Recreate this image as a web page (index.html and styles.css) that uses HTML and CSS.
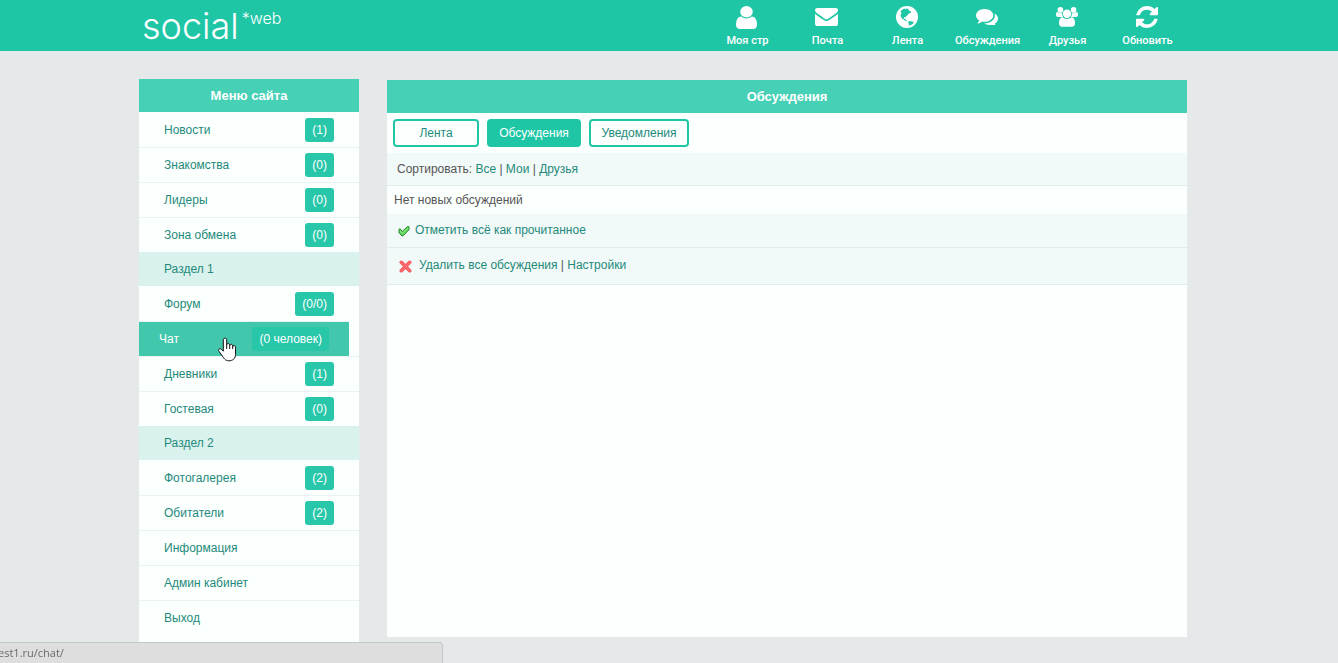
FILE: index.html
```html
<!DOCTYPE html>
<html lang="ru">
<head>
<meta charset="utf-8">
<title>Обсуждения</title>
<link rel="stylesheet" href="styles.css">
</head>
<body>
<header class="topbar">
  <div class="wrap topbar-inner">
    <a class="logo" href="#">social<span class="logo-sup">*web</span></a>
    <nav class="topnav">
      <a class="topnav-item" href="#"><span class="ico"><svg width="21" height="23" viewBox="256 128 1280 1536" preserveAspectRatio="none"><path d="M1536 1399q0 109-62.500 187t-150.500 78h-854q-88 0-150.500-78t-62.500-187q0-85 8.500-160.500t31.500-152 58.500-131 94-89 134.500-34.500q131 128 313 128t313-128q76 0 134.500 34.500t94 89 58.500 131 31.500 152 8.500 160.500zm-256-887q0 159-112.500 271.500t-271.500 112.500-271.500-112.500-112.500-271.500 112.500-271.500 271.500-112.500 271.500 112.500 112.500 271.500z"/></svg></span>Моя стр</a>
      <a class="topnav-item" href="#"><span class="ico"><svg width="23" height="18" viewBox="0 256 1792 1408"><path d="M1792 710v794q0 66-47 113t-113 47h-1472q-66 0-113-47t-47-113v-794q44 49 101 87 362 246 497 345 57 42 92.500 65.500t94.500 48 110 24.500h2q51 0 110-24.500t94.500-48 92.500-65.500q170-123 498-345 57-39 100-87zm0-294q0 79-49 151t-122 123q-376 261-468 325-10 7-42.500 31t-54 38.500-52 32.500-57.500 27-50 9h-2q-23 0-50-9t-57.500-27-52-32.500-54-38.500-42.500-31q-91-64-262-182.500t-205-142.500q-62-42-117-115.500t-55-136.500q0-78 41.500-130t118.500-52h1472q65 0 112.500 47t47.500 113z"/></svg></span>Почта</a>
      <a class="topnav-item" href="#"><span class="ico"><svg width="22" height="22" viewBox="0 0 22 22"><circle cx="11" cy="11" r="11"/><path class="land" d="M4.500 4.800l1.400-.6 1.300-1.200 1.500-.5.800.7 1.500-.8 1.700.4-1 1 1.300.3.800 1.100 1.400.4-.3 1.500-1.500.2-1.300 1-.7 1.300-1.300.7-.5 1.100-1.200-.4-.8.9.9.9 1 .1.300 1.200 1.300.5-.4.7-1.800-.8-1.400-1.200-1.600-.8-1.100-1.900-.2-1.800.9-1.500zM12.300 15.800l1.600-.9 1.900.6 1.700.6.100.9-1.400 1.300-2.200 1.100-1.400.2.500-1.700-.9-.9z"/></svg></span>Лента</a>
      <a class="topnav-item" href="#"><span class="ico"><svg width="22" height="16" viewBox="0 256 1792 1280" preserveAspectRatio="none"><path d="M1408 768q0 139-94 257t-256.500 186.500-353.500 68.500q-86 0-176-16-124 88-278 128-36 9-86 16h-3q-11 0-20.500-8t-11.500-21q-1-3-1-6.500t.5-6.500 2-6l2.500-5 3.500-5.500 4-5 4.500-5 4-4.500q5-6 23-25t26-29.500 22.500-29 25-38.500 20.500-44q-124-72-195-177t-71-224q0-139 94-257t256.500-186.500 353.500-68.500 353.500 68.500 256.500 186.500 94 257zm384 256q0 120-71 224.500t-195 176.500q10 24 20.500 44t25 38.500 22.500 29 26 29.500 23 25q1 1 4 4.500t4.500 5 4 5 3.500 5.500l2.500 5 2 6 .5 6.500-1 6.500q-3 14-13 22t-22 7q-50-7-86-16-154-40-278-128-90 16-176 16-271 0-472-132 58 4 88 4 161 0 309-45t264-129q125-92 192-212t67-254q0-77-23-152 129 71 204 178t75 230z"/></svg></span>Обсуждения</a>
      <a class="topnav-item" href="#"><span class="ico"><svg width="22" height="20" viewBox="0 0 22 20"><circle cx="4.400" cy="2.900" r="2.800"/><circle cx="17.600" cy="2.900" r="2.800"/><circle cx="11" cy="6.800" r="4.200"/><path d="M6.700 9.900H2.200C.7 9.900 0 9 0 7.900 0 6.200.4 5 1.300 5c.5 0 1.500 1.200 3.300 1.200.5 0 1-.1 1.600-.3-.2 1.500.1 2.900.9 3.900zM15.300 9.900h4.500c1.500 0 2.200-.9 2.200-2 0-1.700-.4-2.900-1.300-2.900-.5 0-1.500 1.200-3.300 1.200-.5 0-1-.1-1.600-.3.200 1.500-.1 2.900-.9 3.900zM6.700 10.300c1.100.9 2.500 1.700 4.300 1.700s3.200-.8 4.300-1.700c2.700 0 3.700 2.600 3.700 6.300 0 2-1.300 3.200-3 3.200H6c-1.700 0-3-1.200-3-3.200 0-3.700 1-6.300 3.700-6.300z"/></svg></span>Друзья</a>
      <a class="topnav-item" href="#"><span class="ico"><svg width="22" height="22" viewBox="128 128 1536 1536"><path d="M1639 1056q0 5-1 7-64 268-268 434.500t-478 166.500q-146 0-282.500-55t-243.500-157l-129 129q-19 19-45 19t-45-19-19-45v-448q0-26 19-45t45-19h448q26 0 45 19t19 45-19 45l-137 137q71 66 161 102t187 36q134 0 250-65t186-179q11-17 53-117 8-23 30-23h192q13 0 22.500 9.500t9.500 22.500zm25-800v448q0 26-19 45t-45 19h-448q-26 0-45-19t-19-45 19-45l138-138q-148-137-349-137-134 0-250 65t-186 179q-11 17-53 117-8 23-30 23h-199q-13 0-22.500-9.500t-9.500-22.500v-7q65-268 270-434.500t480-166.500q146 0 284 55.500t245 156.500l130-129q19-19 45-19t45 19 19 45z"/></svg></span>Обновить</a>
    </nav>
  </div>
</header>

<div class="wrap page">
  <aside class="sidebar">
    <h2 class="title">Меню сайта</h2>
    <nav class="menu">
      <a class="menu-item first" href="#">Новости<span class="badge">(1)</span></a>
      <a class="menu-item" href="#">Знакомства<span class="badge">(0)</span></a>
      <a class="menu-item" href="#">Лидеры<span class="badge">(0)</span></a>
      <a class="menu-item" href="#">Зона обмена<span class="badge">(0)</span></a>
      <div class="menu-section">Раздел 1</div>
      <a class="menu-item first" href="#">Форум<span class="badge">(0/0)</span></a>
      <a class="menu-item active" href="#">Чат<span class="badge">(0 человек)</span>
        <svg class="cursor" width="19" height="25" viewBox="0 0 19 25"><path d="M7 1.200C5.900 1.200 5.300 2 5.300 3v11.200L3.500 12.400c-.9-.8-1.900-.8-2.500-.2-.6.700-.5 1.500.1 2.300l3.300 4.600c1.100 1.700 1.900 2.500 2.300 3 .9 1 2.200 1.700 4.100 1.700 4 0 6.700-2.300 6.700-6.300V10.200c0-1-.6-1.700-1.400-1.700s-1.400.5-1.400 1.300v-.9c0-1-.7-1.600-1.500-1.600s-1.500.6-1.500 1.500v-.7c0-1-.7-1.600-1.500-1.600s-1.500.6-1.500 1.500V3c0-1-.6-1.800-1.700-1.800z"/><path d="M8.700 8v4M11.700 8.500V12M14.700 9.500V12"/></svg>
      </a>
      <a class="menu-item" href="#">Дневники<span class="badge">(1)</span></a>
      <a class="menu-item" href="#">Гостевая<span class="badge">(0)</span></a>
      <div class="menu-section">Раздел 2</div>
      <a class="menu-item first" href="#">Фотогалерея<span class="badge">(2)</span></a>
      <a class="menu-item" href="#">Обитатели<span class="badge">(2)</span></a>
      <a class="menu-item" href="#">Информация</a>
      <a class="menu-item" href="#">Админ кабинет</a>
      <a class="menu-item" href="#">Выход</a>
    </nav>
  </aside>

  <main class="content">
    <h1 class="title">Обсуждения</h1>
    <nav class="tabs">
      <a class="tab tab-short" href="#">Лента</a>
      <a class="tab current" href="#">Обсуждения</a>
      <a class="tab tab-long" href="#">Уведомления</a>
    </nav>
    <div class="row sort">Сортировать: <a href="#">Все</a> | <a href="#">Мои</a> | <a href="#">Друзья</a></div>
    <p class="empty">Нет новых обсуждений</p>
    <div class="row mark"><svg width="12" height="12" viewBox="0 0 12 12"><path d="M1 4.200l1.200-.4L4.300 6.500 9.500 1.500 11 1.800v3L4.800 11H4L1 7.800z" fill="#5fd35a" stroke="#2a8a30"/><path d="M2 6l2.500 2.500L10 3.500" fill="none" stroke="#8fe886"/></svg><a href="#">Отметить всё как прочитанное</a></div>
    <div class="row remove"><svg width="13" height="13" viewBox="0 0 13 13"><path d="M2.300 2.300l8.400 8.400M10.700 2.300l-8.400 8.400" fill="none" stroke="#f2555a" stroke-width="3.600" stroke-linecap="round"/><path d="M2.300 2.300l8.400 8.400M10.700 2.300l-8.400 8.400" fill="none" stroke="#fb6a6c" stroke-width="2" stroke-linecap="round"/></svg><span><a href="#">Удалить все обсуждения</a> | <a href="#">Настройки</a></span></div>
  </main>
</div>

<div class="statusbar">est1.ru/chat/</div>
</body>
</html>
```

FILE: styles.css
```css
* { box-sizing: border-box; }

body {
  margin: 0;
  min-height: 100vh;
  background: #e5e9ea;
  font: 12px/16px "Liberation Sans", Arial, sans-serif;
  color: #555;
}

a { color: #1f8a7a; text-decoration: none; }

.topbar, .page { padding-right: 12px; }
.topbar { background: #1fc6a6; }
.wrap { max-width: 1060px; margin: 0 auto; }
.topbar .wrap { max-width: 1048px; }

.page {
  display: flex;
  align-items: flex-start;
  gap: 28px;
  padding-top: 28px;
}

.topbar-inner {
  display: flex;
  justify-content: space-between;
  height: 51px;
}

.logo {
  display: flex;
  align-items: flex-start;
  gap: 3px;
  padding: 4px 0 0 3px;
  font: 300 36px/44px Inter, "Liberation Sans", sans-serif;
  color: #fff;
}
.logo-sup { font-size: 16px; line-height: 28px; }

.topnav { display: flex; }
.topnav-item {
  width: 80px;
  padding: 5px 0 0 1px;
  font: 500 11px/14px Roboto, "Liberation Sans", sans-serif;
  color: #fff;
  text-align: center;
}
.ico {
  display: flex;
  align-items: center;
  justify-content: center;
  height: 24px;
  margin-bottom: 5px;
  padding-right: 2px;
}
.ico svg { fill: #fff; }
.ico .land { fill: #1fc6a6; }

.sidebar {
  flex: 0 0 220px;
  padding-bottom: 12px;
  background: #fbfffe;
}

.title {
  margin: 0;
  background: #46d0b5;
  color: #fff;
  font-size: 13px;
  line-height: 33px;
  text-align: center;
}

.menu-item {
  display: flex;
  align-items: center;
  justify-content: space-between;
  height: 35px;
  padding: 0 25px;
  border-top: 1px solid #e9f3f3;
}
.menu-item.first { border-top-color: transparent; }
.menu-item.active {
  position: relative;
  margin-right: 10px;
  padding: 0 20px;
  background: #42c7ad;
  color: #fff;
}
.badge {
  padding: 0 7px;
  border-radius: 3px;
  background: #28c7a9;
  color: #fff;
  line-height: 24px;
}
.menu-section {
  padding: 0 25px;
  background: #daf2ee;
  color: #1f8a7a;
  line-height: 34px;
}
.cursor {
  position: absolute;
  left: 79px;
  top: 15px;
  fill: #fff;
  stroke: #111;
}

.content {
  flex: 1;
  min-width: 0;
  min-height: 557px;
  margin-top: 1px;
  background: #fbfffe;
}

.tabs {
  display: flex;
  gap: 8px;
  padding: 6px;
}
.tab {
  min-width: 94px;
  border: 2px solid #1fc6a6;
  border-radius: 4px;
  line-height: 24px;
  text-align: center;
}
.tab-short { min-width: 86px; }
.tab-long { min-width: 100px; }
.tab.current { background: #1fc6a6; color: #fff; }

.row {
  display: flex;
  align-items: center;
  border-bottom: 1px solid #dfebec;
  background: #f2f9f9;
  white-space: pre;
}
.sort { padding: 8px 10px; }
.empty { margin: 0; padding: 6px 7px; }
.mark { gap: 5px; padding: 8px 11px 9px; }
.remove { gap: 7px; padding: 9px 12px 11px; }
.row svg { margin-top: 2px; }

.statusbar {
  position: fixed;
  left: 0;
  bottom: 0;
  width: 443px;
  border: 1px solid #c3c8c8;
  border-width: 1px 1px 0 0;
  border-radius: 0 4px 0 0;
  background: #dedede;
  color: #6a6a6a;
  font: 11px/20px "Open Sans", sans-serif;
  text-indent: -2px;
}
```
